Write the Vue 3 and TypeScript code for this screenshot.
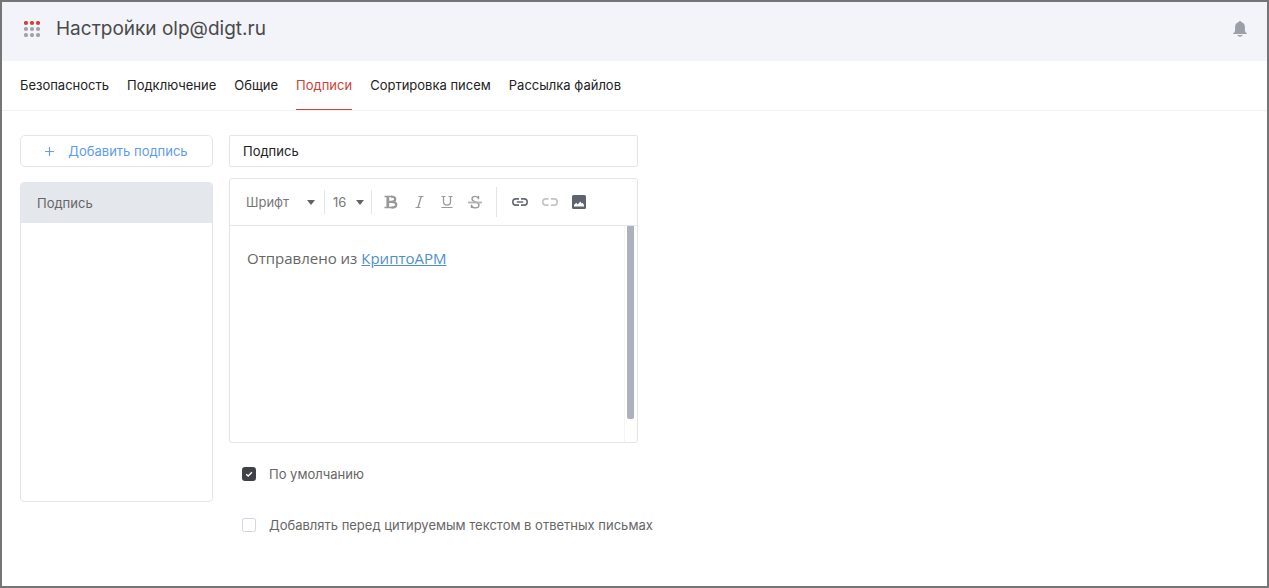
<script setup lang="ts">
import { ref } from 'vue'

interface Tab {
  id: string
  title: string
}

const tabs: Tab[] = [
  { id: 'security', title: 'Безопасность' },
  { id: 'connection', title: 'Подключение' },
  { id: 'general', title: 'Общие' },
  { id: 'signatures', title: 'Подписи' },
  { id: 'sorting', title: 'Сортировка писем' },
  { id: 'files', title: 'Рассылка файлов' },
]

const activeTab = ref('signatures')
const signatures = ref<string[]>(['Подпись'])
const selected = ref(0)
const font = ref('Шрифт')
const size = ref('16')
const isDefault = ref(true)
const beforeQuote = ref(false)

function addSignature(): void {
  signatures.value.push('Подпись')
  selected.value = signatures.value.length - 1
}
</script>

<template>
  <div class="window">
    <header class="header">
      <button class="icon-btn" type="button" aria-label="Меню приложений">
        <svg width="16" height="16" viewBox="0 0 16 16">
          <g fill="#cc4437">
            <circle cx="2" cy="2" r="2.1" /><circle cx="8" cy="2" r="2.1" /><circle cx="14" cy="2" r="2.1" />
          </g>
          <g fill="#9fa2a9">
            <circle cx="2" cy="8" r="2.1" /><circle cx="8" cy="8" r="2.1" /><circle cx="14" cy="8" r="2.1" />
            <circle cx="2" cy="14" r="2.1" /><circle cx="8" cy="14" r="2.1" /><circle cx="14" cy="14" r="2.1" />
          </g>
        </svg>
      </button>
      <h1 class="title">Настройки olp@digt.ru</h1>
      <button class="icon-btn" type="button" aria-label="Уведомления">
        <svg width="14" height="16" viewBox="0 0 14 16" fill="#9a9fa8">
          <path d="M7 0C6.300 0 5.900.5 5.800 1.100C3.400 1.700 2.100 3.600 2.100 6v3.300c0 1.300-.8 2.300-2 3.100V13h13.800v-.6c-1.200-.8-2-1.800-2-3.100V6c0-2.400-1.300-4.300-3.700-4.900C8.100.5 7.700 0 7 0z" />
          <path d="M4.400 14h5.200c-.4 1.100-1.400 1.700-2.600 1.700s-2.200-.6-2.600-1.700z" />
        </svg>
      </button>
    </header>

    <nav class="tabs">
      <a
        v-for="tab in tabs"
        :key="tab.id"
        class="tab"
        :class="{ active: tab.id === activeTab }"
        :href="'#' + tab.id"
        @click="activeTab = tab.id"
      >{{ tab.title }}</a>
    </nav>

    <main class="content">
      <aside class="side">
        <button class="add" type="button" @click="addSignature">
          <svg width="9" height="9" viewBox="0 0 9 9" stroke="#6d9fd6" stroke-width="1.200">
            <path d="M4.500 0v9M0 4.500h9" />
          </svg>
          <span>Добавить подпись</span>
        </button>
        <div class="list">
          <button
            v-for="(name, i) in signatures"
            :key="i"
            type="button"
            class="item"
            :class="{ current: i === selected }"
            @click="selected = i"
          >{{ name }}</button>
        </div>
      </aside>

      <section class="form">
        <input v-model="signatures[selected]" class="name" type="text" aria-label="Название подписи" />

        <div class="editor">
          <div class="toolbar">
            <label class="picker font">
              <select v-model="font" aria-label="Шрифт">
                <option>Шрифт</option>
                <option>Arial</option>
              </select>
              <svg width="8" height="5" viewBox="0 0 8 5" fill="#5f6368"><path d="M0 0h8L4 5z" /></svg>
            </label>
            <label class="picker size">
              <select v-model="size" aria-label="Размер">
                <option>14</option>
                <option>16</option>
                <option>18</option>
              </select>
              <svg width="8" height="5" viewBox="0 0 8 5" fill="#5f6368"><path d="M0 0h8L4 5z" /></svg>
            </label>
            <div class="group styles">
              <button class="icon-btn" type="button" aria-label="Полужирный">
                <svg width="14" height="14" viewBox="0 0 14 14" fill="none" stroke="#999">
                  <path d="M.5 1.500H8M.5 12.500H8.500" stroke-width="1.600" />
                  <path d="M3.800 1v12" stroke-width="2.800" />
                  <path d="M7 1.600c3 0 4.200.8 4.200 2.500S10 6.800 7 6.800H5M7.500 6.800c3.200 0 4.700 1 4.700 2.900s-1.500 2.800-4.700 2.800" stroke-width="2.300" />
                </svg>
              </button>
              <button class="icon-btn" type="button" aria-label="Курсив">
                <svg width="14" height="14" viewBox="0 0 14 14" fill="none" stroke="#999">
                  <path d="M6.500 1.500h5M3.500 12.500h5" stroke-width="1" />
                  <path d="M9.200 1.500L6 12.500" stroke-width="1.400" />
                </svg>
              </button>
              <button class="icon-btn" type="button" aria-label="Подчёркнутый">
                <svg width="14" height="14" viewBox="0 0 14 14" fill="none" stroke="#999">
                  <path d="M1.500 1.500h4M8.500 1.500h4M1.500 12.500h11" />
                  <path d="M3.500 1.500v5.300c0 2.200 1.200 3.300 3.500 3.300s3.500-1.100 3.500-3.300V1.500" stroke-width="1.300" />
                </svg>
              </button>
              <button class="icon-btn" type="button" aria-label="Зачёркнутый">
                <svg width="14" height="14" viewBox="0 0 14 14" fill="none" stroke="#999">
                  <path d="M10.500 1v3.300M10.500 3.500C10 2.200 8.700 1.400 7.200 1.400 5.300 1.400 4 2.400 4 4c0 3.500 7 2.300 7 6 0 1.800-1.500 2.900-3.700 2.900-1.800 0-3.200-.8-3.800-2.400M3.500 9.800v3.300" stroke-width="1.400" />
                  <path d="M0 7.500h14" stroke="#b5b5b5" stroke-width="1.800" />
                </svg>
              </button>
            </div>
            <div class="group inserts">
              <button class="icon-btn" type="button" aria-label="Вставить ссылку">
                <svg width="16" height="8" viewBox="0 0 16 8" fill="none" stroke="#666a70" stroke-width="1.600">
                  <path d="M7 .9H3.900a3.100 3.100 0 0 0 0 6.200H7M9 .9h3.100a3.100 3.100 0 0 1 0 6.200H9M4.800 4h6.400" />
                </svg>
              </button>
              <button class="icon-btn" type="button" aria-label="Убрать ссылку">
                <svg width="16" height="8" viewBox="0 0 16 8" fill="none" stroke="#c2c3c6" stroke-width="1.600">
                  <path d="M6.500 .9H3.900a3.100 3.100 0 0 0 0 6.200H6.500M9 .9h3.100a3.100 3.100 0 0 1 0 6.200H9" />
                </svg>
              </button>
              <button class="icon-btn" type="button" aria-label="Вставить изображение">
                <svg width="14" height="14" viewBox="0 0 14 14">
                  <rect width="14" height="14" rx="1.500" fill="#5f636b" />
                  <path d="M2 11.500V10l2.200-2.200 1.500 1.700L8.300 6.500l1.300 2 .9-.8L12 10v1.500z" fill="#fff" />
                </svg>
              </button>
            </div>
          </div>
          <div class="pane">
            <div class="text" contenteditable="true" role="textbox" aria-label="Текст подписи">Отправлено из <a href="#cryptoarm">КриптоАРМ</a></div>
            <div class="track"><div class="thumb"></div></div>
          </div>
        </div>

        <label class="check">
          <input v-model="isDefault" type="checkbox" />
          <svg class="box" width="14" height="14" viewBox="0 0 14 14" fill="none">
            <rect v-if="isDefault" width="14" height="14" rx="3" fill="#404146" />
            <path v-if="isDefault" d="M4.200 7.200l2 1.800 3.700-3.800" stroke="#fff" stroke-width="1.400" />
            <rect v-else x=".5" y=".5" width="13" height="13" rx="2" stroke="#d3d5dc" fill="#fff" />
          </svg>
          <span>По умолчанию</span>
        </label>
        <label class="check">
          <input v-model="beforeQuote" type="checkbox" />
          <svg class="box" width="14" height="14" viewBox="0 0 14 14" fill="none">
            <rect v-if="beforeQuote" width="14" height="14" rx="3" fill="#404146" />
            <path v-if="beforeQuote" d="M4.200 7.200l2 1.800 3.700-3.800" stroke="#fff" stroke-width="1.400" />
            <rect v-else x=".5" y=".5" width="13" height="13" rx="2" stroke="#d3d5dc" fill="#fff" />
          </svg>
          <span>Добавлять перед цитируемым текстом в ответных письмах</span>
        </label>
      </section>
    </main>
  </div>
</template>

<style>
body {
  margin: 0;
}
</style>

<style scoped>
.window {
  box-sizing: border-box;
  min-height: 100vh;
  border: 2px solid #757575;
  background: #fff;
  color: #666;
  font: 13px/20px Inter, "Liberation Sans", sans-serif;
}
button,
input,
select {
  box-sizing: border-box;
  margin: 0;
  font: inherit;
  color: inherit;
}
svg {
  display: block;
}
.icon-btn {
  display: block;
  padding: 0;
  border: 0;
  background: none;
}
.header {
  display: flex;
  align-items: center;
  gap: 16px;
  box-sizing: border-box;
  height: 59px;
  padding: 0 20px 5px 22px;
  background: #f3f4fa;
}
.title {
  flex: 1;
  margin: 0;
  font-size: 19px;
  line-height: 24px;
  font-weight: 400;
  color: #4a4a4a;
}
.tabs {
  display: flex;
  gap: 18px;
  padding: 0 18px;
  border-bottom: 1px solid #f0f1f7;
}
.tab {
  padding: 14px 0;
  border-bottom: 1px solid transparent;
  color: #222;
  text-decoration: none;
}
.tab.active {
  color: #cc4437;
  border-color: #cc4437;
}
.content {
  display: flex;
  align-items: flex-start;
  gap: 16px;
  padding: 24px 18px 0;
}
.side {
  width: 193px;
}
.add {
  display: flex;
  align-items: center;
  justify-content: center;
  gap: 14px;
  width: 100%;
  height: 32px;
  margin-bottom: 15px;
  padding: 0;
  border: 1px solid #e4e5ec;
  border-radius: 5px;
  background: #fff;
  color: #5c9cee;
}
.list {
  box-sizing: border-box;
  min-height: 320px;
  border: 1px solid #e4e5ec;
  border-radius: 4px;
  overflow: hidden;
}
.item {
  display: block;
  width: 100%;
  height: 40px;
  padding: 0 16px;
  border: 0;
  background: #fff;
  text-align: left;
}
.item.current {
  background: #e4e7ec;
}
.form {
  flex: 0 1 430px;
}
.name {
  display: block;
  width: 409px;
  max-width: 100%;
  height: 32px;
  margin-bottom: 11px;
  padding: 0 13px;
  border: 1px solid #e4e5ec;
  border-radius: 2px;
  color: #222;
}
.editor {
  box-sizing: border-box;
  width: 409px;
  max-width: 100%;
  margin-bottom: 21px;
  border: 1px solid #e4e5ec;
  border-radius: 3px;
}
.toolbar {
  display: flex;
  align-items: center;
  height: 46px;
  border-bottom: 1px solid #e4e5ec;
}
.picker {
  display: grid;
  align-items: center;
  height: 24px;
  border-right: 1px solid #e4e5ec;
}
.picker select,
.picker svg {
  grid-area: 1 / 1;
}
.picker select {
  width: 100%;
  height: 24px;
  padding: 0;
  border: 0;
  background: none;
  color: #777;
  appearance: none;
}
.picker svg {
  justify-self: end;
  pointer-events: none;
}
.picker.font {
  width: 69px;
  padding: 0 9px 0 16px;
}
.picker.size {
  width: 31px;
  padding: 0 7px 0 8px;
}
.group {
  display: flex;
  align-items: center;
}
.styles {
  gap: 14px;
  height: 30px;
  padding: 0 14px 0 12px;
  border-right: 1px solid #e4e5ec;
}
.inserts {
  gap: 14px;
  padding-left: 15px;
}
.pane {
  display: flex;
  min-height: 216px;
}
.text {
  flex: 1;
  padding: 20px 17px;
  font: 15px/24px "Open Sans", "Noto Sans", sans-serif;
  outline: none;
}
.text a {
  color: #4f8fca;
}
.track {
  width: 10px;
  padding-left: 2px;
  border-left: 1px solid #f5f5f8;
}
.thumb {
  width: 7px;
  height: 193px;
  border-radius: 0 0 2px 2px;
  background: #adb1be;
}
.check {
  display: flex;
  align-items: center;
  gap: 13px;
  margin-bottom: 31px;
  padding-left: 13px;
}
.check input {
  position: absolute;
  width: 14px;
  height: 14px;
  opacity: 0;
}
.box {
  flex: none;
}
.check span {
  white-space: nowrap;
}
</style>
